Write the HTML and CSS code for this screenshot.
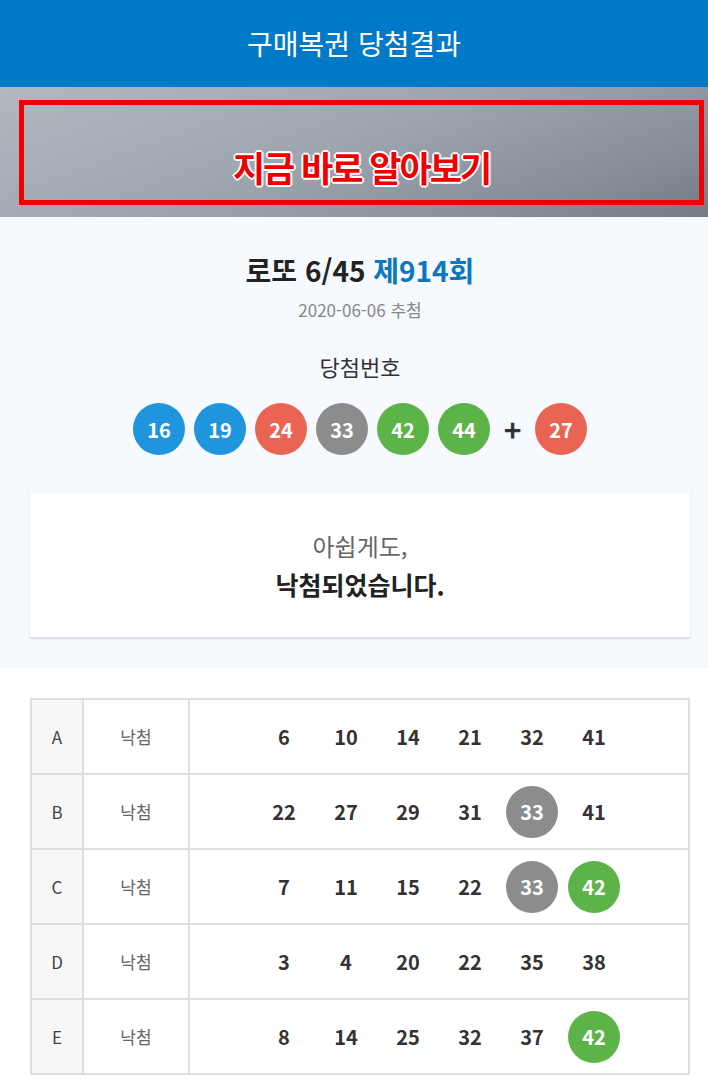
FILE: index.html
```html
<!DOCTYPE html>
<html lang="ko">
<head>
    <meta charset="UTF-8">
    <meta name="viewport" content="width=device-width, initial-scale=1.0">
    <title>구매복권 당첨결과</title>
    <link rel="stylesheet" href="styles.css">
</head>
<body>
    <div class="header">구매복권 당첨결과</div>

    <div class="banner">
        <div class="banner-box">
            <span class="banner-text">지금 바로 알아보기</span>
        </div>
    </div>

    <div class="result">
        <div class="round">로또 6/45 <span class="round-no">제914회</span></div>
        <div class="date">2020-06-06 추첨</div>
        <div class="win-title">당첨번호</div>
        <div class="balls">
            <span class="ball blue">16</span>
            <span class="ball blue">19</span>
            <span class="ball red">24</span>
            <span class="ball gray">33</span>
            <span class="ball green">42</span>
            <span class="ball green">44</span>
            <span class="plus">+</span>
            <span class="ball red">27</span>
        </div>
        <div class="card">
            <div class="card-sub">아쉽게도,</div>
            <div class="card-main">낙첨되었습니다.</div>
        </div>
    </div>

    <table class="games">
        <tr>
            <td class="game">A</td>
            <td class="state">낙첨</td>
            <td class="nums">
                <span class="num">6</span><span class="num">10</span><span class="num">14</span><span class="num">21</span><span class="num">32</span><span class="num">41</span>
            </td>
        </tr>
        <tr>
            <td class="game">B</td>
            <td class="state">낙첨</td>
            <td class="nums">
                <span class="num">22</span><span class="num">27</span><span class="num">29</span><span class="num">31</span><span class="num"><span class="ball gray">33</span></span><span class="num">41</span>
            </td>
        </tr>
        <tr>
            <td class="game">C</td>
            <td class="state">낙첨</td>
            <td class="nums">
                <span class="num">7</span><span class="num">11</span><span class="num">15</span><span class="num">22</span><span class="num"><span class="ball gray">33</span></span><span class="num"><span class="ball green">42</span></span>
            </td>
        </tr>
        <tr>
            <td class="game">D</td>
            <td class="state">낙첨</td>
            <td class="nums">
                <span class="num">3</span><span class="num">4</span><span class="num">20</span><span class="num">22</span><span class="num">35</span><span class="num">38</span>
            </td>
        </tr>
        <tr>
            <td class="game">E</td>
            <td class="state">낙첨</td>
            <td class="nums">
                <span class="num">8</span><span class="num">14</span><span class="num">25</span><span class="num">32</span><span class="num">37</span><span class="num"><span class="ball green">42</span></span>
            </td>
        </tr>
    </table>
</body>
</html>
```

FILE: styles.css
```css
body{
    margin: 0;
    font-family: "Noto Sans CJK KR", "Noto Sans", sans-serif;
    color: #333;
    background-color: #fff;
}
.header{
    height: 87px;
    background-color: #0079c6;
    color: #fff;
    font-size: 28px;
    line-height: 87px;
    text-align: center;
}
.banner{
    height: 130px;
    padding: 13px 4px 12px 19px;
    box-sizing: border-box;
    background: linear-gradient(160deg, #b2b8c0 0%, #9ea6b0 45%, #868e99 80%, #747b86 100%);
}
.banner-box{
    height: 105px;
    border: 5px solid #f00000;
    box-sizing: border-box;
    display: flex;
    align-items: center;
    justify-content: center;
    padding-top: 28px;
}
.banner-text{
    font-size: 35px;
    font-weight: bold;
    color: #ee0000;
    letter-spacing: -2px;
    text-shadow: 2px 0 0 #fff, -2px 0 0 #fff, 0 2px 0 #fff, 0 -2px 0 #fff,
        1px 1px 0 #fff, -1px -1px 0 #fff, 1px -1px 0 #fff, -1px 1px 0 #fff;
}
.result{
    background-color: #f6f9fe;
    padding: 29px 18px 31px 30px;
    text-align: center;
}
.round{
    font-size: 28px;
    font-weight: bold;
    color: #222;
    line-height: 48px;
}
.round-no{
    color: #0a77c0;
}
.date{
    font-size: 17px;
    color: #888;
    line-height: 28px;
    margin-top: 2px;
}
.win-title{
    font-size: 22px;
    color: #333;
    margin-top: 25px;
    line-height: 34px;
}
.balls{
    display: flex;
    justify-content: center;
    align-items: center;
    gap: 9px;
    margin-top: 20px;
}
.ball{
    display: inline-flex;
    width: 52px;
    height: 52px;
    border-radius: 50%;
    align-items: center;
    justify-content: center;
    color: #fff;
    font-size: 20px;
    font-weight: bold;
}
.blue{ background-color: #1e95dc; }
.red{ background-color: #ea6454; }
.gray{ background-color: #8c8c8c; }
.green{ background-color: #5cb448; }
.plus{
    font-size: 30px;
    font-weight: bold;
    color: #333;
    width: 27px;
    text-align: center;
}
.card{
    background-color: #fff;
    margin-top: 38px;
    height: 144px;
    box-shadow: 0 2px 2px rgba(0,0,0,0.12);
    display: flex;
    flex-direction: column;
    justify-content: center;
}
.card-sub{
    font-size: 24px;
    color: #666;
    line-height: 39px;
}
.card-main{
    font-size: 25px;
    font-weight: bold;
    color: #222;
    line-height: 39px;
}
.games{
    margin: 30px 18px 0 30px;
    width: 660px;
    border-collapse: collapse;
    border: 2px solid #dedede;
}
.games td{
    border: 2px solid #dedede;
    height: 73px;
    text-align: center;
    padding: 0;
}
.game{
    width: 50px;
    background-color: #f7f7f7;
    font-size: 17px;
    color: #444;
}
.state{
    width: 104px;
    font-size: 17px;
    color: #666;
}
.nums{
    white-space: nowrap;
}
.num{
    display: inline-flex;
    width: 62px;
    height: 52px;
    justify-content: center;
    align-items: center;
    vertical-align: middle;
    font-size: 20px;
    font-weight: bold;
    color: #333;
}
```
